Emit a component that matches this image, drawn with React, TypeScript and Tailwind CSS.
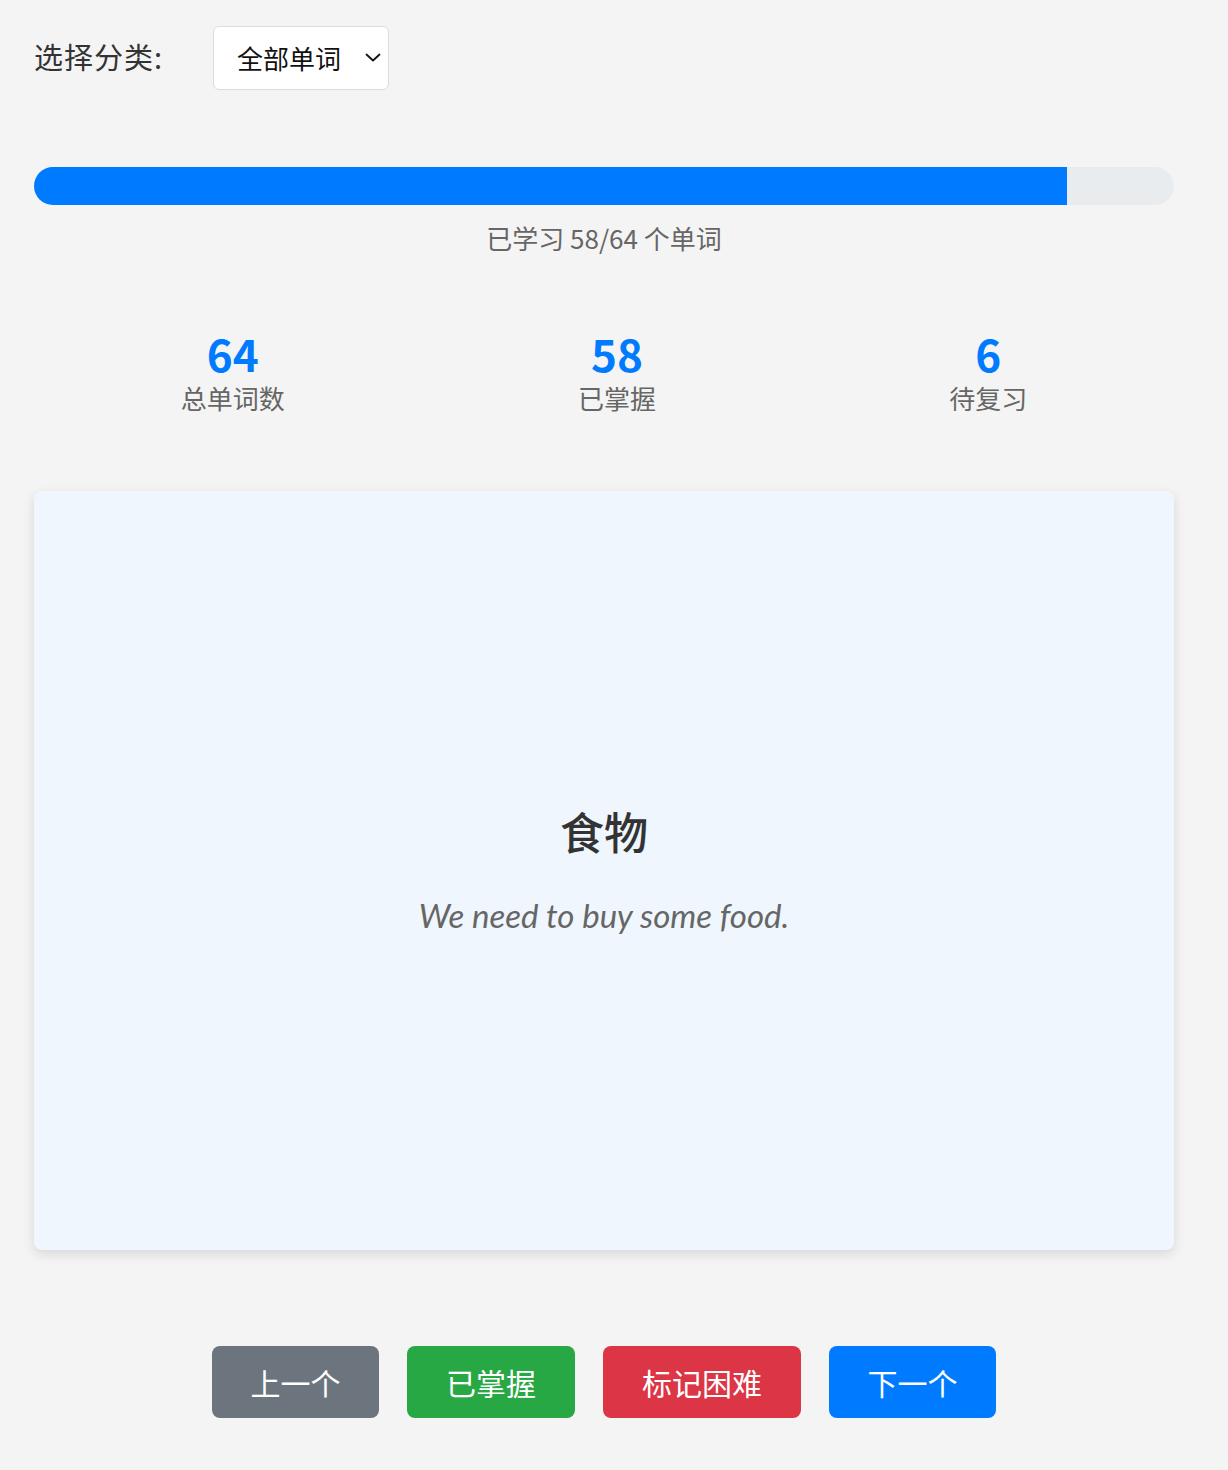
import React from "react";

const font = { fontFamily: '"Noto Sans CJK SC", "Noto Sans", sans-serif' };

function Chevron() {
  return (
    <svg width="16" height="16" viewBox="0 0 16 16" fill="none">
      <path d="M1.5 4.5 L8 10.5 L14.5 4.5" stroke="#111" strokeWidth="1.8" strokeLinecap="round" strokeLinejoin="round" />
    </svg>
  );
}

export default function App() {
  const total = 64;
  const learned = 58;
  const pct = (learned / total) * 100;
  return (
    <div className="min-h-[1470px] w-full bg-[#f4f4f4] pl-[34px] pt-[26px]" style={font}>
      <div className="w-[1140px]">
        <div className="flex items-center h-[64px]">
          <span className="-mt-[3px] text-[29px] tracking-[1px] text-[#333] leading-none">选择分类:</span>
          <div className="ml-[50px] flex h-[64px] w-[176px] items-center justify-between rounded-[6px] border border-[#dcdcdc] bg-white pl-[23px] pr-[7px]">
            <span className="text-[26px] text-[#111] leading-none">全部单词</span>
            <Chevron />
          </div>
        </div>

        <div className="mt-[77px] h-[38px] w-full overflow-hidden rounded-full bg-[#e9ecef]">
          <div className="h-full bg-[#007bff]" style={{ width: `${pct}%` }} />
        </div>
        <div className="mt-[17px] text-center text-[26px] leading-[32px] text-[#666]">
          已学习 {learned}/{total} 个单词
        </div>

        <div className="mt-[77px] flex justify-around">
          <div className="flex flex-col items-center">
            <div className="text-[44px] font-bold leading-[44px] text-[#007bff]">64</div>
            <div className="mt-[6px] text-[26px] leading-[34px] text-[#666]">总单词数</div>
          </div>
          <div className="flex flex-col items-center">
            <div className="text-[44px] font-bold leading-[44px] text-[#007bff]">58</div>
            <div className="mt-[6px] text-[26px] leading-[34px] text-[#666]">已掌握</div>
          </div>
          <div className="flex flex-col items-center">
            <div className="text-[44px] font-bold leading-[44px] text-[#007bff]">6</div>
            <div className="mt-[6px] text-[26px] leading-[34px] text-[#666]">待复习</div>
          </div>
        </div>

        <div className="mt-[76px] flex h-[759px] flex-col items-center justify-center rounded-[8px] bg-[#eff6fe] shadow-[0_4px_12px_rgba(0,0,0,0.12)]">
          <div className="-mt-[4px] text-[44px] font-medium leading-[56px] text-[#333]">食物</div>
          <div className="mt-[36px] text-[33px] italic leading-[40px] text-[#666]" style={{ fontFamily: '"Lato", "Noto Sans", sans-serif' }}>
            We need to buy some food.
          </div>
        </div>

        <div className="mt-[96px] flex justify-center gap-[28px]">
          <button className="h-[72px] w-[167px] rounded-[8px] bg-[#6c757d] text-[30px] text-white">上一个</button>
          <button className="h-[72px] w-[168px] rounded-[8px] bg-[#28a745] text-[30px] text-white">已掌握</button>
          <button className="h-[72px] w-[198px] rounded-[8px] bg-[#dc3545] text-[30px] text-white">标记困难</button>
          <button className="h-[72px] w-[167px] rounded-[8px] bg-[#007bff] text-[30px] text-white">下一个</button>
        </div>
      </div>
    </div>
  );
}
